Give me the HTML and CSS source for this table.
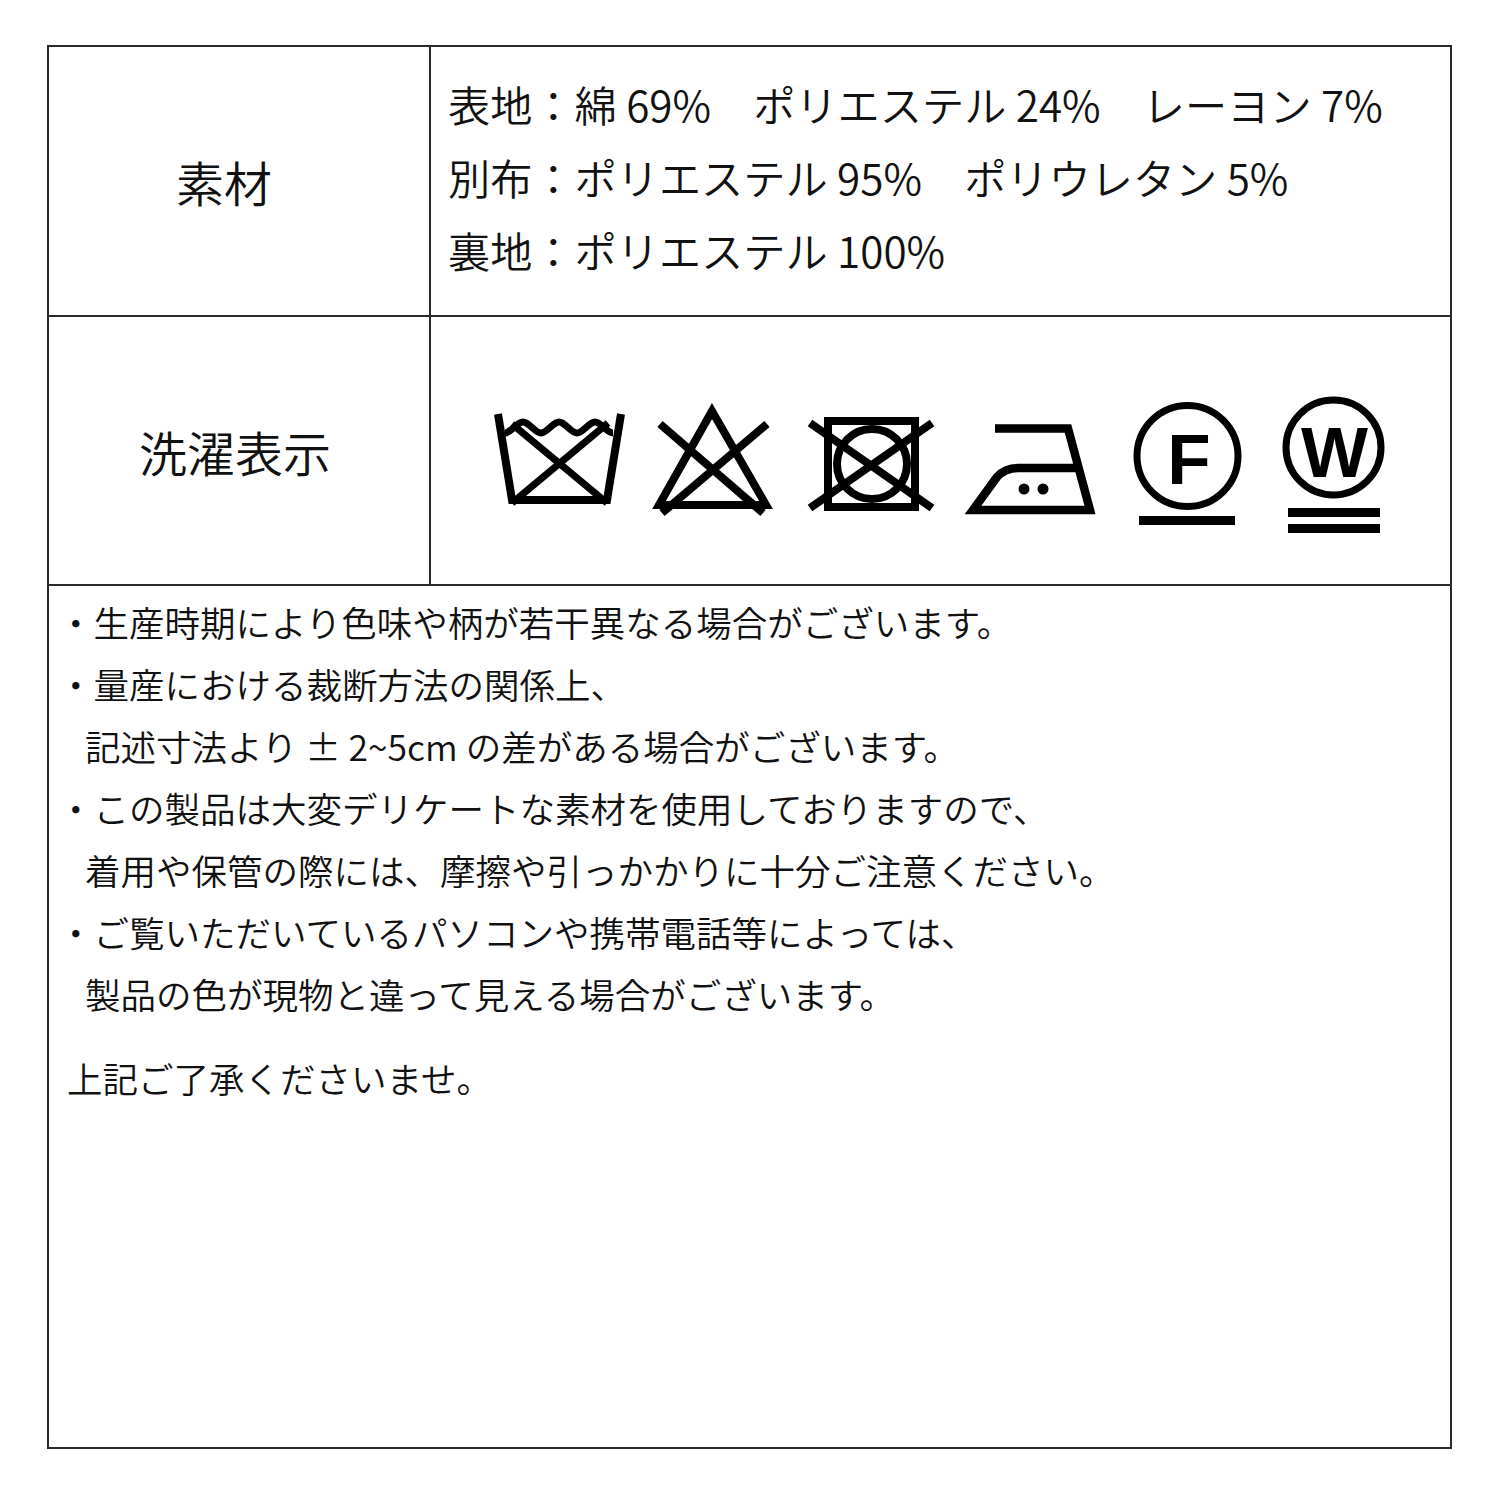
FILE: index.html
```html
<!DOCTYPE html>
<html lang="ja">
<head>
<meta charset="utf-8">
<title>素材・洗濯表示</title>
<link rel="stylesheet" href="styles.css">
</head>
<body>
<div class="sheet">
  <div class="row row-material">
    <div class="label label-material">素材</div>
    <div class="value material">
      <div class="mline">表地：綿 69%　ポリエステル 24%　レーヨン 7%</div>
      <div class="mline">別布：ポリエステル 95%　ポリウレタン 5%</div>
      <div class="mline">裏地：ポリエステル 100%</div>
    </div>
  </div>
  <div class="row row-care">
    <div class="label label-care">洗濯表示</div>
    <div class="value icons">
      <svg class="icon" viewBox="0 0 155 170" width="155" height="170" aria-label="手洗い不可">
        <polyline points="14,48 28,134 123,134 137,48" fill="none" stroke="#000" stroke-width="8" stroke-linejoin="miter"/>
        <path d="M21,67 C27,67 33,56 39,56 S51,67 57,67 S69,56 75,56 S87,67 93,67 S105,56 111,56 S123,67 129,67" fill="none" stroke="#000" stroke-width="7"/>
        <line x1="28" y1="58" x2="123" y2="137" stroke="#000" stroke-width="7"/>
        <line x1="124" y1="57" x2="28" y2="137" stroke="#000" stroke-width="7"/>
      </svg>
      <svg class="icon" viewBox="0 0 155 170" width="155" height="170" aria-label="漂白不可">
        <polygon points="73,45 20,139 127,139" fill="none" stroke="#000" stroke-width="8" stroke-linejoin="miter"/>
        <line x1="21" y1="58" x2="124" y2="147" stroke="#000" stroke-width="8"/>
        <line x1="128" y1="58" x2="23" y2="147" stroke="#000" stroke-width="8"/>
      </svg>
      <svg class="icon" viewBox="0 0 155 170" width="155" height="170" aria-label="タンブル乾燥不可">
        <rect x="34" y="55" width="87" height="86" fill="none" stroke="#000" stroke-width="8"/>
        <circle cx="78" cy="98" r="35" fill="none" stroke="#000" stroke-width="8"/>
        <line x1="16" y1="57" x2="138" y2="142" stroke="#000" stroke-width="8"/>
        <line x1="138" y1="57" x2="16" y2="142" stroke="#000" stroke-width="8"/>
      </svg>
      <svg class="icon" viewBox="0 0 155 170" width="155" height="170" aria-label="アイロン中温">
        <path d="M46,62.5 L119,62.5 L141,144 L24,144 L48,111 Q56,102 70,102 L130,102" fill="none" stroke="#000" stroke-width="8.5" stroke-linejoin="miter"/>
        <circle cx="75" cy="123" r="5.5" fill="#000"/>
        <circle cx="94" cy="123" r="5.5" fill="#000"/>
      </svg>
      <svg class="icon" viewBox="0 0 155 170" width="155" height="170" aria-label="ドライクリーニング弱">
        <circle cx="83.5" cy="90" r="50.5" fill="none" stroke="#000" stroke-width="7"/>
        <text x="85" y="118" class="icon-letter" text-anchor="middle">F</text>
        <rect x="35" y="150" width="96" height="9" fill="#000"/>
      </svg>
      <svg class="icon" viewBox="0 0 155 170" width="155" height="170" aria-label="ウエットクリーニング非常に弱い">
        <circle cx="74.5" cy="81.5" r="47.5" fill="none" stroke="#000" stroke-width="7"/>
        <text x="75.5" y="111" class="icon-letter" text-anchor="middle">W</text>
        <rect x="29" y="142" width="92" height="9" fill="#000"/>
        <rect x="29" y="158" width="92" height="9" fill="#000"/>
      </svg>
    </div>
  </div>
  <div class="notes">
    <div class="nline">・生産時期により色味や柄が若干異なる場合がございます。</div>
    <div class="nline">・量産における裁断方法の関係上、</div>
    <div class="nline cont">記述寸法より ± 2~5cm の差がある場合がございます。</div>
    <div class="nline">・この製品は大変デリケートな素材を使用しておりますので、</div>
    <div class="nline cont">着用や保管の際には、摩擦や引っかかりに十分ご注意ください。</div>
    <div class="nline">・ご覧いただいているパソコンや携帯電話等によっては、</div>
    <div class="nline cont">製品の色が現物と違って見える場合がございます。</div>
    <div class="nline closing">上記ご了承くださいませ。</div>
  </div>
</div>
</body>
</html>
```

FILE: styles.css
```css
* {
  box-sizing: border-box;
}

html, body {
  margin: 0;
  padding: 0;
  background: #ffffff;
}

body {
  font-family: "Noto Sans CJK JP", "Noto Sans", sans-serif;
  font-weight: 350;
  color: #111111;
}

.sheet {
  margin: 45px 0 0 47px;
  width: 1405px;
  height: 1404px;
  border: 2px solid #2a2a2a;
  display: flex;
  flex-direction: column;
}

.row {
  display: flex;
  border-bottom: 2px solid #2a2a2a;
}

.row-material {
  height: 270px;
}

.row-care {
  height: 269px;
}

.label {
  width: 382px;
  flex: none;
  border-right: 2px solid #2a2a2a;
  display: flex;
  align-items: center;
  justify-content: center;
  font-size: 48px;
  line-height: 1;
}

.label-material {
  padding-right: 30px;
}

.label-care {
  padding-right: 8px;
}

.value {
  flex: 1;
}

.material {
  padding: 20px 0 0 17px;
  font-size: 42.2px;
}

.mline {
  line-height: 73px;
  white-space: pre;
}

.icons {
  display: flex;
  align-items: center;
  padding-left: 53px;
}

.icon {
  display: block;
  flex: none;
}

.icon-letter {
  font-family: "Liberation Sans", Arial, sans-serif;
  font-weight: bold;
  font-size: 71px;
  fill: #000;
}

.notes {
  flex: 1;
  padding: 5px 0 0 9px;
  font-size: 35.5px;
}

.nline {
  line-height: 62px;
  white-space: pre;
}

.cont {
  padding-left: 27px;
}

.closing {
  margin-top: 22px;
  padding-left: 9px;
}
```
